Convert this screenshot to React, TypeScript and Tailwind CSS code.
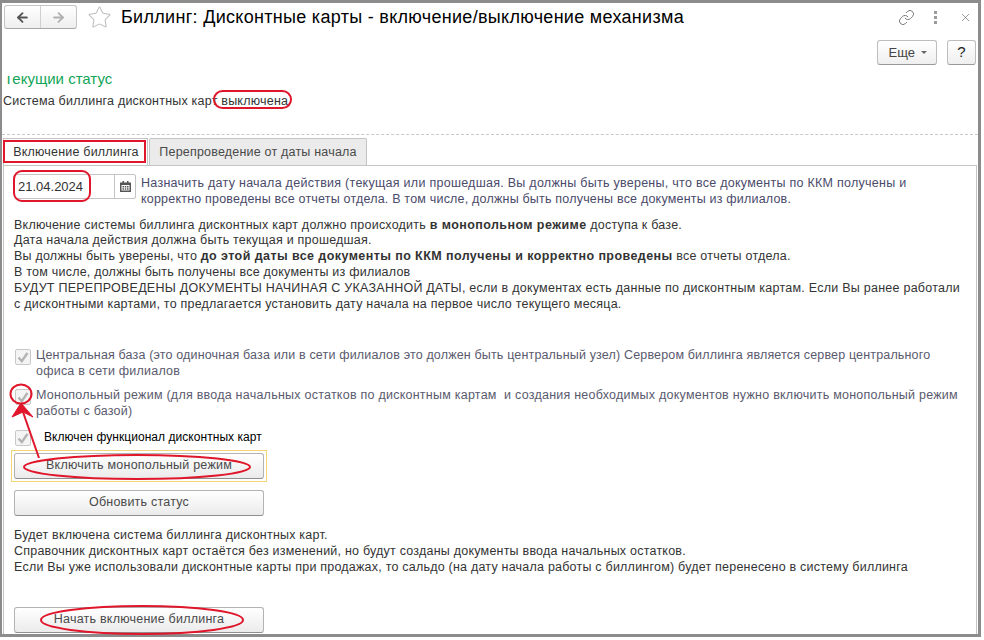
import { ArrowLeft, ArrowRight, Star, Link, X } from 'lucide-react';

function Check({ top }: { top?: boolean }) {
  return (
    <div className={`w-4 h-4 shrink-0 border border-[#c8c8c8] rounded-[2px] bg-[#f4f4f4] flex items-center justify-center ${top ? 'mt-px' : ''}`}>
      <svg width="12" height="12" viewBox="0 0 12 12" fill="none">
        <path d="M1.5 6.5 L4.8 10 L10.5 2" stroke="#b4b4b4" strokeWidth="2.4" />
      </svg>
    </div>
  );
}

function Btn({ label }: { label: string }) {
  return (
    <button className="w-[250px] h-[26px] border border-[#b3b3b3] border-b-[#8f8f8f] rounded-[3px] bg-gradient-to-b from-white to-[#ebebeb] text-[12.5px] text-[#4a4a4a] flex items-center justify-center">
      {label}
    </button>
  );
}

export default function App() {
  return (
    <div className="w-[984px] h-[640px] bg-white overflow-hidden relative font-['Liberation_Sans',Arial,sans-serif] text-[12.5px]">
      <div className="w-[981px] h-[637px] border-t-[3px] border-l-2 border-r-[3px] border-b-[3px] border-[#8c8c8c] flex flex-col">
        {/* head */}
        <div className="h-[28px] flex items-center pl-[2px] pr-[5px] shrink-0">
          <div className="w-[73px] h-[24px] flex border border-[#c4c4c4] border-b-[#a8a8a8] rounded-[3px] bg-gradient-to-b from-white to-[#eeeeee]">
            <div className="w-[36px] flex items-center justify-center border-r border-[#d0d0d0]">
              <ArrowLeft size={15} strokeWidth={3} color="#555555" />
            </div>
            <div className="flex-1 flex items-center justify-center">
              <ArrowRight size={15} strokeWidth={3} color="#b0b0b0" />
            </div>
          </div>
          <Star size={25} strokeWidth={1} color="#bdbdbd" className="ml-[10px]" />
          <h1 className="ml-[9px] text-[18px] text-black tracking-[0.3px] whitespace-nowrap">Биллинг: Дисконтные карты - включение/выключение механизма</h1>
          <div className="ml-auto flex items-center">
            <Link size={17} strokeWidth={1.2} color="#666666" />
            <div className="ml-[19px] flex flex-col gap-[2px]">
              <span className="w-[3px] h-[3px] bg-[#9a9a9a]" />
              <span className="w-[3px] h-[3px] bg-[#9a9a9a]" />
              <span className="w-[3px] h-[3px] bg-[#9a9a9a]" />
            </div>
            <X size={13} strokeWidth={1.2} color="#666666" className="ml-[22px] mr-[1px]" />
          </div>
        </div>
        {/* command bar */}
        <div className="flex justify-end gap-[10px] pr-[2px] h-[24px] mt-[9px] shrink-0">
          <button className="w-[60px] h-[25px] border border-[#bdbdbd] border-b-[#999999] rounded-[3px] bg-gradient-to-b from-white to-[#efefef] text-[13px] text-[#444444] flex items-center justify-end pr-[9px] gap-[6px]">
            Еще
            <span className="w-0 h-0 border-l-[3px] border-r-[3px] border-t-[3px] border-l-transparent border-r-transparent border-t-[#666666]" />
          </button>
          <button className="w-[29px] h-[25px] border border-[#bdbdbd] border-b-[#999999] rounded-[3px] bg-gradient-to-b from-white to-[#efefef] text-[15px] text-[#222222] flex items-center justify-center">?</button>
        </div>
        {/* status: the heading is cut at its top in the original too */}
        <div className="mt-[12px] h-[12px] pl-[2px] overflow-hidden shrink-0 flex items-end">
          <span className="text-[15px] leading-[16px] text-[#12a557] mb-[1px]">Текущий статус</span>
        </div>
        <div className="mt-[5px] pl-[1px] h-[16px] leading-[16px] text-[#333333] tracking-[0.22px] shrink-0 whitespace-nowrap">
          Система биллинга дисконтных карт выключена
        </div>
        <div className="mt-[25px] h-0 border-t border-dashed border-[#c8c8c8] shrink-0" />
        {/* tabs */}
        <div className="mt-[3px] pl-[1px] flex h-[27px] shrink-0">
          <div className="w-[145px] h-[28px] bg-white border border-b-0 border-[#c4c4c4] text-[#333333] text-[12.5px] tracking-[0.2px] flex items-center justify-center pl-px">Включение биллинга</div>
          <div className="ml-px w-[218px] h-[27px] bg-[#ebebeb] border border-b-0 border-[#c4c4c4] rounded-t-[2px] text-[#4a4a4a] text-[12.5px] tracking-[0.2px] flex items-center justify-center">Перепроведение от даты начала</div>
        </div>
        {/* panel */}
        <div className="ml-[1px] mr-px flex-1 border border-b-0 border-[#c4c4c4] pl-[10px] pr-2 pt-[8px] text-[#3c3c3c] tracking-[0.22px] flex flex-col leading-[15.8px] whitespace-nowrap">
          <div className="flex">
            <div className="w-[122px] h-[25px] border border-[#c4c4c4] rounded-[2px] flex shrink-0">
              <div className="flex-1 pl-[3px] text-[13px] tracking-normal text-[#333333] leading-[23px]">21.04.2024</div>
              <div className="w-[21px] border-l border-[#c4c4c4] flex items-center justify-center">
                <svg width="11" height="11" viewBox="0 0 11 11">
                  <path d="M0 1.5h11v9.5H0z M1.5 4v5.5h8V4z" fill="#555555" fillRule="evenodd" />
                  <path d="M2.5 0h1.5v2H2.5z M7 0h1.5v2H7z M2.5 5h1.5v1.5H2.5z M4.8 5h1.5v1.5H4.8z M7 5h1.5v1.5H7z M2.5 7.2h1.5v1.5H2.5z M4.8 7.2h1.5v1.5H4.8z M7 7.2h1.5v1.5H7z" fill="#555555" />
                </svg>
              </div>
            </div>
            <p className="ml-[5px] text-[#4a4a6a] mt-[2px]">
              <span className="tracking-[0.27px]">Назначить дату начала действия (текущая или прошедшая. Вы должны быть уверены, что все документы по ККМ получены и</span><br />
              <span className="tracking-[0.2px]">корректно проведены все отчеты отдела. В том числе, должны быть получены все документы из филиалов.</span>
            </p>
          </div>
          <div className="mt-[10px] text-[#333333]">
            <p>Включение системы биллинга дисконтных карт должно происходить <b className="tracking-[0.42px]">в монопольном режиме</b> доступа к базе.</p>
            <p>Дата начала действия должна быть текущая и прошедшая.</p>
            <p>Вы должны быть уверены, что <b className="tracking-[0.42px]">до этой даты все документы по ККМ получены и корректно проведены</b> все отчеты отдела.</p>
            <p>В том числе, должны быть получены все документы из филиалов</p>
            <p><span className="tracking-[0.25px]">БУДУТ ПЕРЕПРОВЕДЕНЫ ДОКУМЕНТЫ НАЧИНАЯ С УКАЗАННОЙ ДАТЫ, если в документах есть данные по дисконтным картам. Если Вы ранее работали</span><br />с дисконтными картами, то предлагается установить дату начала на первое число текущего месяца.</p>
          </div>
          <div className="mt-[36px] flex gap-[5px] pl-px">
            <Check top />
            <p className="text-[#5a5a6e]"><span className="tracking-[0.16px]">Центральная база (это одиночная база или в сети филиалов это должен быть центральный узел) Сервером биллинга является сервер центрального</span><br />офиса в сети филиалов</p>
          </div>
          <div className="mt-[8px] flex gap-[5px] pl-px">
            <Check top />
            <p className="text-[#5a5a6e]"><span className="tracking-[0.24px]">Монопольный режим (для ввода начальных остатков по дисконтным картам&nbsp; и создания необходимых документов нужно включить монопольный режим</span><br />работы с базой)</p>
          </div>
          <div className="mt-[10px] flex items-center pl-px h-[17px]">
            <Check />
            <span className="ml-[13px] text-[12px] text-black tracking-[0.05px]">Включен функционал дисконтных карт</span>
          </div>
          <div className="mt-[3px] -ml-[3px] w-[256px] h-[32px] border border-[#f2d675] flex items-center justify-center">
            <Btn label="Включить монопольный режим" />
          </div>
          <div className="mt-[8px]">
            <Btn label="Обновить статус" />
          </div>
          <div className="mt-[11px] text-[#333333] leading-[16px]">
            <p>Будет включена система биллинга дисконтных карт.</p>
            <p>Справочник дисконтных карт остаётся без изменений, но будут созданы документы ввода начальных остатков.</p>
            <p>Если Вы уже использовали дисконтные карты при продажах, то сальдо (на дату начала работы с биллингом) будет перенесено в систему биллинга</p>
          </div>
          <div className="mt-[32px]">
            <Btn label="Начать включение биллинга" />
          </div>
        </div>
      </div>
      {/* red annotations drawn over the screenshot */}
      <svg className="absolute inset-0 pointer-events-none z-20" width="984" height="640" fill="none" stroke="#e0162b" strokeWidth="2">
        <rect x="214" y="91" width="77" height="17" rx="8.5" />
        <rect x="4" y="141" width="141" height="21" />
        <rect x="14" y="171" width="76" height="30" rx="8" />
        <ellipse cx="21" cy="394" rx="10.5" ry="9.5" />
        <ellipse cx="137" cy="467" rx="113" ry="12" />
        <ellipse cx="142" cy="620" rx="101" ry="14" />
        <path d="M39 458 L23 412" />
        <path d="M21 403 L33 417 L23 412 L12 417 Z" fill="#e0162b" stroke="#e0162b" strokeWidth="1" />
      </svg>
    </div>
  );
}
